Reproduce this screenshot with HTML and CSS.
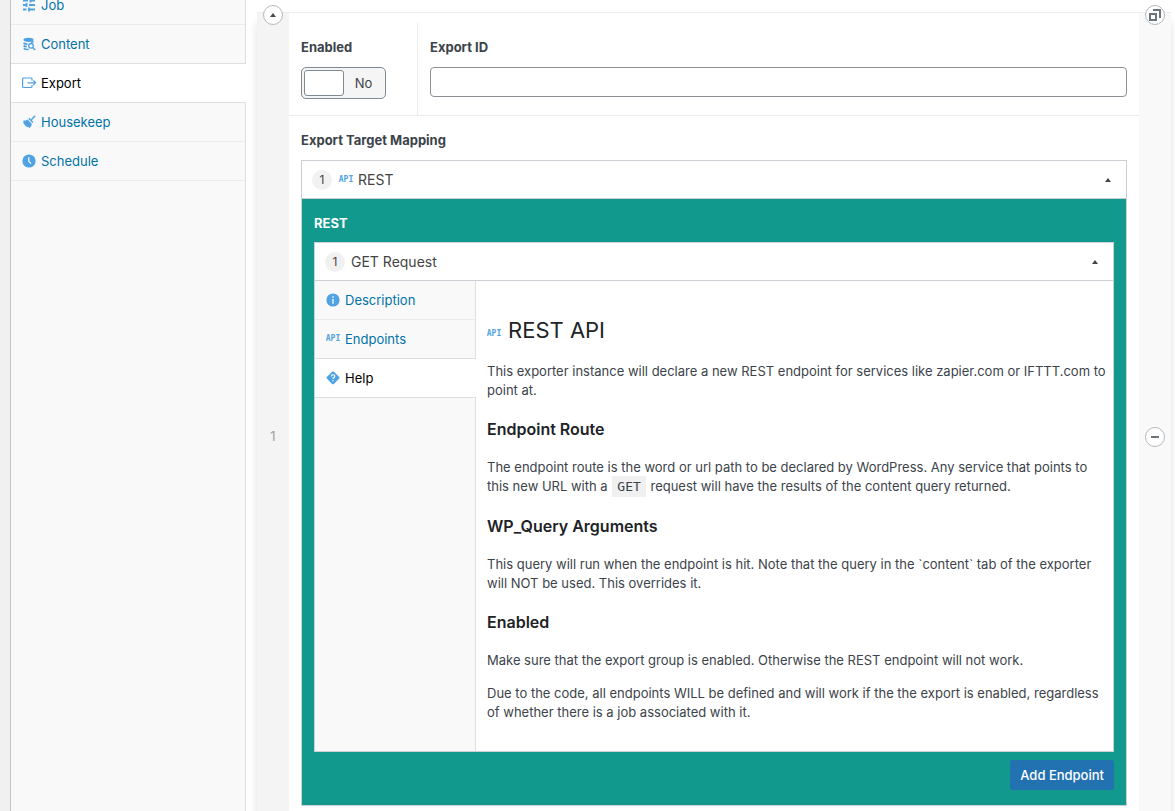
FILE: index.html
```html
<!DOCTYPE html>
<html lang="en">
<head>
<meta charset="utf-8">
<title>Export settings</title>
<link rel="stylesheet" href="styles.css">
</head>
<body>
<div class="page">
  <nav class="tabs tabs-main" aria-label="Sections">
    <a class="tab" href="#job">
      <svg class="icon" viewBox="0 0 14 14" fill="none" stroke="currentColor" stroke-width="1.800"><path d="M1 2.500h5M8.500 2.500H13M8.500.5v4M1 7h2.500M4.500 5v4M7 7h6M1 11.500h3.500M7 9.500v4M7 11.500h6"/></svg>
      <span>Job</span>
    </a>
    <a class="tab before-active" href="#content">
      <svg class="icon" viewBox="0 0 14 14"><ellipse cx="6.500" cy="2.800" rx="5" ry="2.100" fill="currentColor"/><path d="M1.500 5.800c1 .9 2.500 1.300 4 1.300M1.500 8.500c.8.700 2 1.100 3.300 1.200M1.700 11.300c1 1 3 1.300 5 1.200M9 5.300q1.600-.2 2.500-.9" fill="none" stroke="currentColor" stroke-width="1.700"/><circle cx="9" cy="8.800" r="2.300" fill="none" stroke="currentColor" stroke-width="1.300"/><path d="M10.700 10.500l2.500 2.600" stroke="currentColor" stroke-width="1.400"/></svg>
      <span>Content</span>
    </a>
    <a class="tab active" href="#export" aria-current="page">
      <svg class="icon" viewBox="0 0 14 14" fill="none" stroke="currentColor" stroke-width="1.200"><path d="M10 4.500V3q0-1-1-1H1.600q-1 0-1 1v7.500q0 1 1 1H9q1 0 1-1V9M5.500 6.800h8M11.300 4.500l2.300 2.300-2.300 2.300"/></svg>
      <span>Export</span>
    </a>
    <a class="tab" href="#housekeep">
      <svg class="icon" viewBox="0 0 14 14"><path d="M13.200.8L9.300 4.700" stroke="currentColor" stroke-width="1.500"/><path d="M6.200 3.700l1.100-.9 4 4-.9 1.100zM5.500 4.400l4.300 4.300c-.2 2-1 3.500-2.300 4.300L5.800 11.500l.3 1.100C3.500 11.300 1.500 9 .9 6.200l1.300.5-.9-1.200c1.600.3 3-.1 4.200-1.100z" fill="currentColor"/></svg>
      <span>Housekeep</span>
    </a>
    <a class="tab" href="#schedule">
      <svg class="icon" viewBox="0 0 14 14"><circle cx="7" cy="7" r="6.600" fill="currentColor"/><path d="M6.800 3.300v4l2.300 2.400" fill="none" stroke="#fff" stroke-width="1.200"/></svg>
      <span>Schedule</span>
    </a>
  </nav>

  <main class="content">
    <section class="row">
      <div class="row-order">
        <button class="round at-top" type="button" aria-label="Collapse row"><svg width="6" height="4" viewBox="0 0 6 4"><path d="M3 0l3 4H0z" fill="currentColor"/></svg></button>
        <span>1</span>
      </div>
      <div class="fields">
        <div class="field-line">
          <div class="field field-enabled">
            <label class="label" for="enabled">Enabled</label>
            <div class="switch">
              <input class="switch-input" type="checkbox" id="enabled">
              <span class="switch-knob"></span>
              <span class="switch-text">No</span>
            </div>
          </div>
          <div class="field field-id">
            <label class="label" for="export-id">Export ID</label>
            <input class="text-input" type="text" id="export-id">
          </div>
        </div>

        <div class="field field-mapping">
          <div class="label">Export Target Mapping</div>
          <div class="layout">
            <div class="layout-head">
              <span class="badge">1</span>
              <span class="api" aria-hidden="true">API</span>
              <span class="layout-title">REST</span>
              <button class="toggle" type="button" aria-label="Toggle REST"><svg width="6" height="4" viewBox="0 0 6 4"><path d="M3 0l3 4H0z" fill="currentColor"/></svg></button>
            </div>
            <div class="layout-body">
              <div class="label label-light">REST</div>
              <div class="layout">
                <div class="layout-head">
                  <span class="badge">1</span>
                  <span class="layout-title">GET Request</span>
                  <button class="toggle" type="button" aria-label="Toggle GET Request"><svg width="6" height="4" viewBox="0 0 6 4"><path d="M3 0l3 4H0z" fill="currentColor"/></svg></button>
                </div>
                <div class="panel">
                  <nav class="tabs tabs-inner" aria-label="Endpoint">
                    <a class="tab" href="#description">
                      <svg class="icon" viewBox="0 0 14 14"><circle cx="7" cy="7" r="6.600" fill="currentColor"/><path d="M7 3.200v1.500M7 6v4.700" stroke="#fff" stroke-width="1.300"/></svg>
                      <span>Description</span>
                    </a>
                    <a class="tab before-active" href="#endpoints">
                      <span class="api" aria-hidden="true">API</span>
                      <span>Endpoints</span>
                    </a>
                    <a class="tab active" href="#help" aria-current="page">
                      <svg class="icon" viewBox="0 0 14 14"><path d="M7 .3q.5 0 .9.400l5.300 5.300q.8.800 0 1.600l-5.300 5.300q-.9.800-1.800 0L.8 7.600Q0 6.800.8 6L6.100.7Q6.500.3 7 .3z" fill="currentColor"/><path d="M5.300 5.500q.1-1.700 1.800-1.700t1.700 1.400q0 .8-.9 1.300t-.9 1.400M7 9v1.300" fill="none" stroke="#fff" stroke-width="1.100"/></svg>
                      <span>Help</span>
                    </a>
                  </nav>
                  <article class="help">
                    <h2><span class="api" aria-hidden="true">API</span><span>REST API</span></h2>
                    <p>This exporter instance will declare a new REST endpoint for services like zapier.com or IFTTT.com to point at.</p>
                    <h3>Endpoint Route</h3>
                    <p>The endpoint route is the word or url path to be declared by WordPress. Any service that points to this new URL with a <code>GET</code> request will have the results of the content query returned.</p>
                    <h3>WP_Query Arguments</h3>
                    <p>This query will run when the endpoint is hit. Note that the query in the `content` tab of the exporter will NOT be used. This overrides it.</p>
                    <h3>Enabled</h3>
                    <p>Make sure that the export group is enabled. Otherwise the REST endpoint will not work.</p>
                    <p>Due to the code, all endpoints WILL be defined and will work if the the export is enabled, regardless of whether there is a job associated with it.</p>
                  </article>
                </div>
              </div>
              <div class="actions"><button class="primary" type="button">Add Endpoint</button></div>
            </div>
          </div>
        </div>
      </div>
      <div class="row-actions">
        <button class="round at-top" type="button" aria-label="Duplicate row"><svg width="12" height="12" viewBox="0 0 12 12" fill="none" stroke="currentColor" stroke-width="2"><path d="M1 5h6v6H1zM4 1h7v8"/></svg></button>
        <button class="round" type="button" aria-label="Remove row"><svg width="8" height="2" viewBox="0 0 8 2"><path d="M0 0h8v2H0z" fill="currentColor"/></svg></button>
      </div>
    </section>
  </main>
</div>
</body>
</html>
```
FILE: styles.css
```css
* { box-sizing: border-box; }

body {
  margin: 0;
  background: #f0f0f1;
  color: #3c434a;
  font: 13px/19px Inter, "Liberation Sans", sans-serif;
}

button, input { font: inherit; }

.page {
  display: flex;
  height: 100vh;
  margin-left: 10px;
  overflow: hidden;
  border-left: 1px solid #c3c4c7;
  background: #fff;
}

.tabs {
  flex: none;
  border-right: 1px solid #dfdfdf;
  background: #f9f9f9;
}
.tabs-main { width: 235px; padding-top: 25px; }
.tabs-main .tab:first-child { margin-top: -39px; }
.tabs-inner { width: 161px; }

.tab {
  display: flex;
  align-items: center;
  gap: 5px;
  height: 39px;
  padding-left: 11px;
  border-bottom: 1px solid #ececec;
  color: #0073aa;
  text-decoration: none;
}
.tab.before-active { border-bottom-color: #dfdfdf; }
.tab.active {
  margin-right: -1px;
  border-bottom-color: #dfdfdf;
  background: #fff;
  color: #000;
}

.icon {
  flex: none;
  width: 14px;
  height: 14px;
  color: #4fa3e3;
}

.api {
  display: flex;
  flex: none;
  justify-content: center;
  width: 14px;
  color: #4fa3e3;
  font: bold 8px/14px "DejaVu Sans Mono", monospace;
}

.content {
  flex: 1;
  min-width: 0;
  padding: 12px 4px 0 11px;
}

.row {
  display: flex;
  border-top: 1px solid #ececec;
  box-shadow: 0 10px 8px rgba(0, 0, 0, .12);
}

.row-order, .row-actions {
  position: relative;
  display: flex;
  flex: none;
  align-items: center;
  justify-content: center;
  width: 32px;
}
.row-order { background: #f4f4f4; color: #a0a0a0; }
.row-actions { background: #f9f9f9; }

.round {
  display: flex;
  align-items: center;
  justify-content: center;
  width: 20px;
  height: 20px;
  padding: 0;
  border: 1px solid #b4b9be;
  border-radius: 50%;
  background: #fff;
  color: #6c737c;
}
.at-top { position: absolute; top: -8px; left: 6px; }
.row-order .round { color: #444b52; }

.fields { flex: 1; min-width: 0; background: #fff; }

.field-line {
  display: flex;
  padding-top: 10px;
  border-bottom: 1px solid #ececec;
}
.field { padding: 15px 12px 16px; }
.field-enabled { width: 128px; }
.field-id { flex: 1; border-left: 1px solid #ececec; }
.field-mapping { padding-bottom: 54px; }

.label {
  display: block;
  margin-bottom: 10px;
  font-weight: 700;
}

.switch {
  position: relative;
  display: flex;
  align-items: center;
  width: 85px;
  height: 32px;
  padding: 2px;
  border: 1px solid #7e8993;
  border-radius: 5px;
  background: #f5f5f5;
}
.switch-input {
  position: absolute;
  inset: 0;
  width: 100%;
  height: 100%;
  margin: 0;
  opacity: 0;
}
.switch-knob {
  width: 40px;
  height: 26px;
  border: 1px solid #7e8993;
  border-radius: 3px;
  background: #fff;
}
.switch-text { flex: 1; text-align: center; }

.text-input {
  display: block;
  width: 100%;
  height: 30px;
  padding: 0 8px;
  border: 1px solid #8c8f94;
  border-radius: 4px;
  background: #fff;
}

.layout { border: 1px solid #ccd0d4; background: #fff; }

.layout-head {
  display: flex;
  align-items: center;
  height: 38px;
  padding: 0 10px;
  border-bottom: 1px solid #ccd0d4;
  color: #444;
  font-size: 14px;
}
.badge {
  width: 20px;
  margin-right: 6px;
  border-radius: 10px;
  background: #f1f1f1;
  font-size: 12px;
  line-height: 20px;
  text-align: center;
}
.layout-head .api { margin: 0 5px 0 1px; }
.toggle {
  display: flex;
  align-items: center;
  justify-content: center;
  width: 16px;
  height: 20px;
  margin-left: auto;
  padding: 0;
  border: 0;
  background: none;
  color: #444;
}

.layout-body { padding: 15px 12px; background: #11998e; }
.label-light { margin-bottom: 9px; color: #fff; }

.panel { display: flex; }

.help { flex: 1; min-width: 0; padding: 34px 5px 15px 11px; }
.help h2 {
  display: flex;
  align-items: center;
  gap: 7px;
  margin: 0 0 17px;
  color: #1d2327;
  font-size: 22px;
  font-weight: 400;
  line-height: 30px;
}
.help h2 .api { padding-top: 8px; }
.help h3 {
  margin: 18px 0;
  color: #1d2327;
  font-size: 16px;
  font-weight: 600;
  line-height: 22px;
}
.help p { margin: 0 0 14px; }
.help code {
  margin: 0 1px;
  padding: 3px 5px;
  background: #f0f0f1;
  font: 13px/20px "DejaVu Sans Mono", monospace;
}

.actions { display: flex; justify-content: flex-end; margin-top: 8px; }
.primary {
  height: 30px;
  padding: 0 10px;
  border: 0;
  border-radius: 3px;
  background: #2271b1;
  color: #fff;
  font-weight: 500;
}
```
